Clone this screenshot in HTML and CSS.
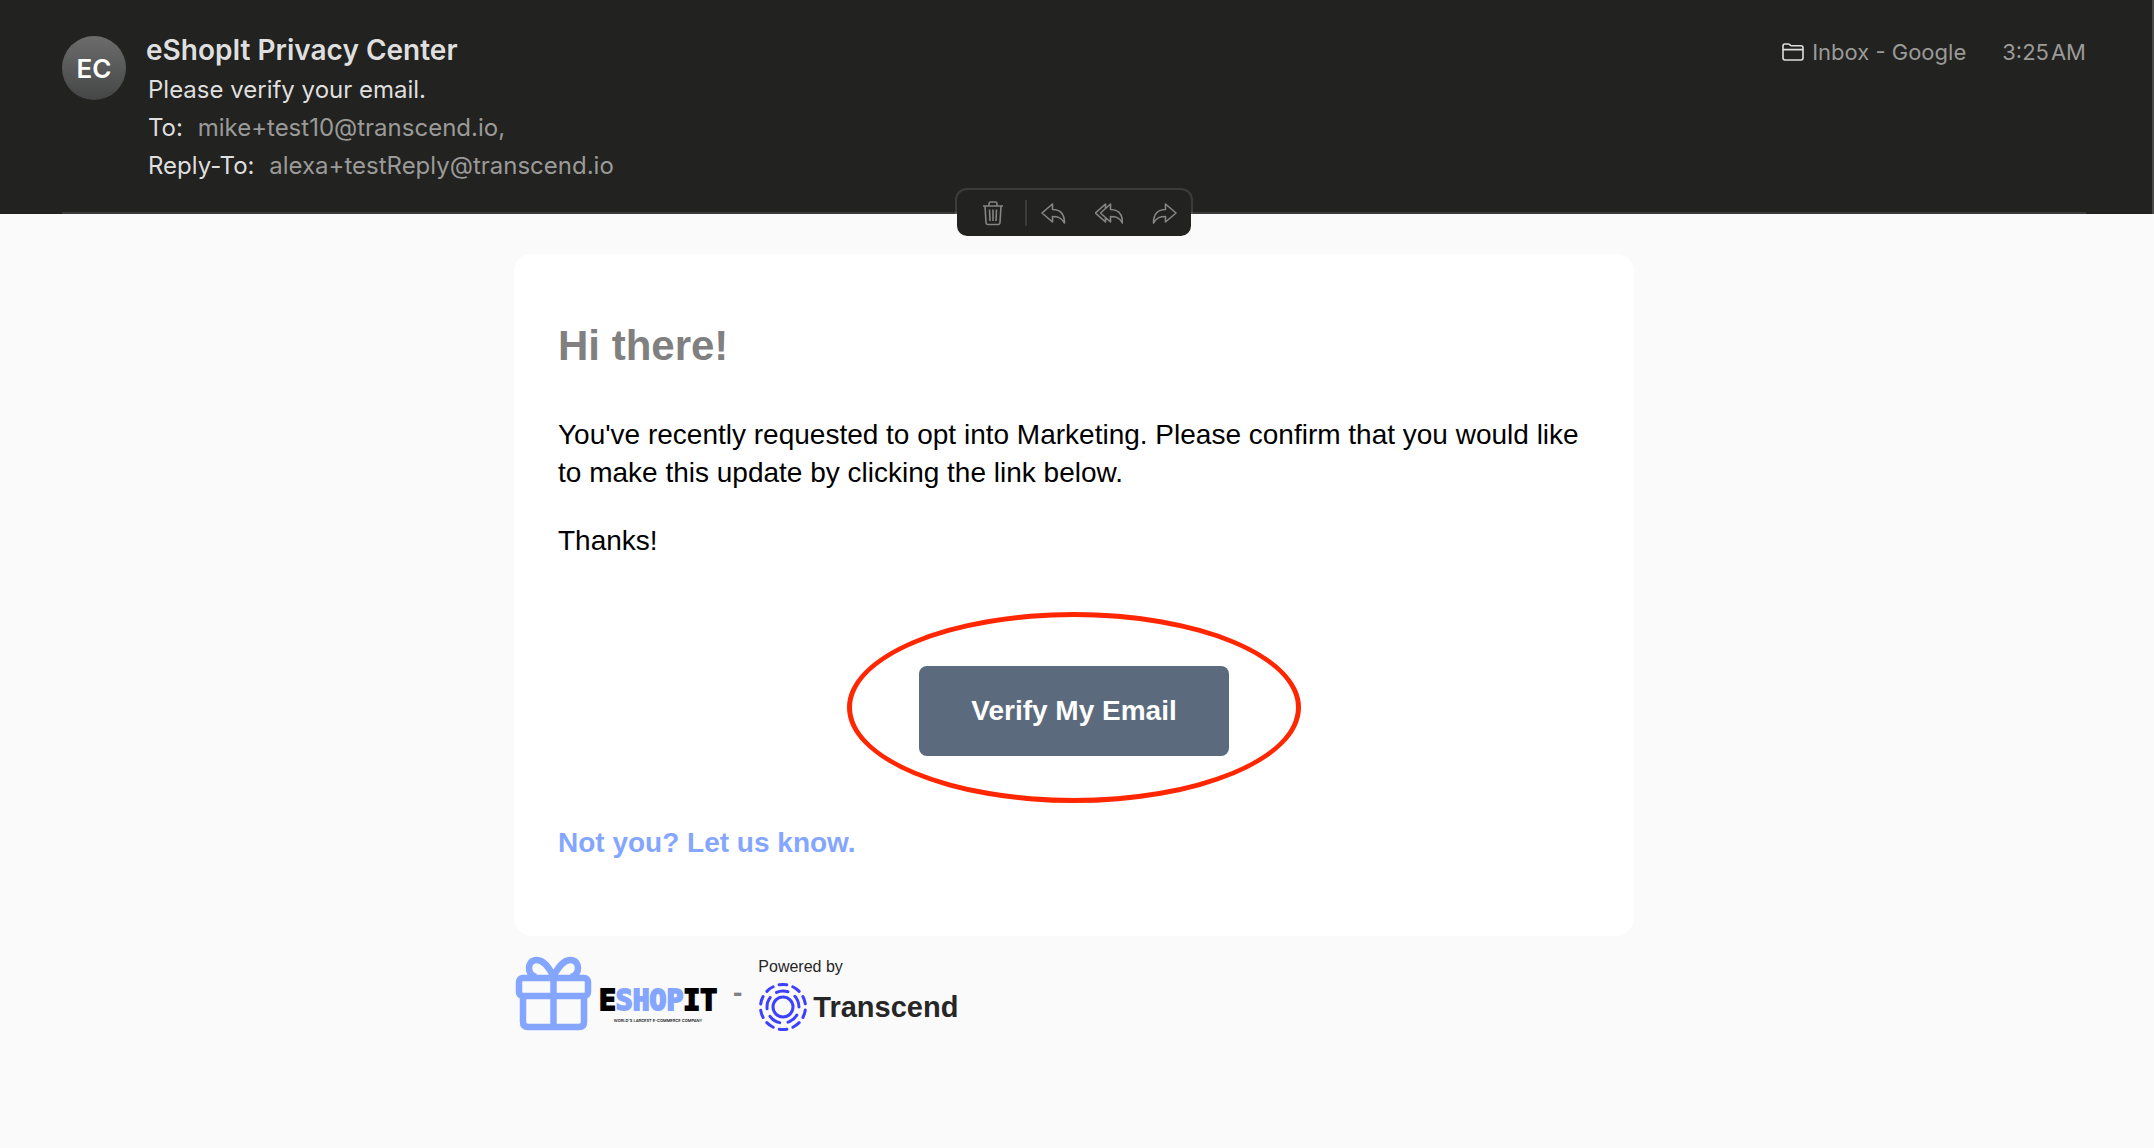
FILE: index.html
```html
<!DOCTYPE html>
<html lang="en">
<head>
    <meta charset="UTF-8">
    <meta name="viewport" content="width=device-width, initial-scale=1.0">
    <title>Please verify your email.</title>
    <link rel="stylesheet" href="styles.css">
</head>
<body>
    <header class="mail-header">
        <div class="header-inner">
            <div class="avatar">EC</div>
            <div class="header-text">
                <div class="sender">eShopIt Privacy Center</div>
                <div class="header-row">Please verify your email.</div>
                <div class="header-row">To: <span class="address">mike+test10@transcend.io,</span></div>
                <div class="header-row">Reply-To: <span class="address">alexa+testReply@transcend.io</span></div>
            </div>
            <div class="header-meta">
                <svg class="folder-icon" viewBox="0 0 22 18" fill="none" stroke="#dededf" stroke-width="1.6" stroke-linejoin="round">
                    <path d="M1 14.5V3Q1 1 3 1H6.2Q7 1 7.7 1.6L8.6 2.4Q9.2 2.8 10 2.8H19Q21 2.8 21 4.8V14.8Q21 17 19 17H3Q1 17 1 14.5ZM1 6.6H21"/>
                </svg>
                <span class="mailbox">Inbox - Google</span>
                <time class="time">3:25&#8202;AM</time>
            </div>
        </div>

        <!-- Actions sit on the bottom edge of the header -->
        <div class="toolbar">
            <button class="tool-btn" aria-label="Delete">
                <svg class="tool-icon" viewBox="0 0 28 28">
                    <path d="M4 7H24M10 7V4.5Q10 3 11.5 3H16.5Q18 3 18 4.5V7M6 7L7 23.5Q7.2 25.5 9 25.5H19Q20.8 25.5 21 23.5L22 7M10.5 10.5L11 22M14 10.5V22M17.5 10.5L17 22"/>
                </svg>
            </button>
            <span class="tool-divider"></span>
            <button class="tool-btn" aria-label="Reply">
                <svg class="tool-icon" viewBox="0 0 28 28">
                    <path d="M3 14L13.5 5V10.5C21 10.5 25.5 15 25.5 24C22.5 19 19.5 17.5 13.5 17.5V23Z"/>
                </svg>
            </button>
            <button class="tool-btn" aria-label="Reply all">
                <svg class="tool-icon" viewBox="0 0 28 28">
                    <path d="M5.500 14L15.500 5V10.500C23 10.500 27.500 15 27.500 24C24.500 19 21.500 17.500 15.500 17.500V23ZM10.500 9.500V5L0.500 14L10.500 23V18.500"/>
                </svg>
            </button>
            <button class="tool-btn" aria-label="Forward">
                <svg class="tool-icon" viewBox="0 0 28 28">
                    <path d="M25 14L14.500 5V10.500C7 10.500 2.500 15 2.500 24C5.500 19 8.500 17.500 14.500 17.500V23Z"/>
                </svg>
            </button>
        </div>
    </header>

    <main class="mail-body">
        <div class="mail-content">
            <section class="card">
                <h1 class="greeting">Hi there!</h1>
                <p class="message">You've recently requested to opt into Marketing. Please confirm that you would like to make this update by clicking the link below.</p>
                <p class="message">Thanks!</p>
                <div class="action">
                    <a class="verify-btn" href="#">Verify My Email</a>
                    <span class="highlight"></span>
                </div>
                <a class="not-you" href="#">Not you? Let us know.</a>
            </section>

            <footer class="footer">
                <div class="shop-logo">
                    <svg class="gift-icon" viewBox="0 0 76 76" fill="none" stroke="#84a6ff" stroke-width="6.5" stroke-linejoin="round">
                        <rect x="5" y="22" width="69" height="18" rx="4"/>
                        <path d="M9 40V66Q9 71 14 71H65Q70 71 70 66V40M39.500 22V71"/>
                        <path d="M39.500 20C35 12 30 4 23 4C17 4 15 8 15 12C15 17 18 20 22 21M39.500 20C44 12 49 4 56 4C62 4 64 8 64 12C64 17 61 20 57 21"/>
                    </svg>
                    <div class="shop-name">
                        <div class="shop-word">E<span class="shop-accent">SHOP</span>IT</div>
                        <div class="shop-tagline">WORLD'S LARGEST E-COMMERCE COMPANY</div>
                    </div>
                </div>
                <span class="dash">-</span>
                <div class="powered">
                    <div class="powered-label">Powered by</div>
                    <div class="transcend">
                        <svg class="transcend-icon" viewBox="0 0 50 50" fill="none" stroke="#3d40ff" stroke-width="3" stroke-linecap="round">
                            <circle cx="25" cy="25" r="10"/>
                            <circle cx="25" cy="25" r="16" pathLength="60" stroke-dasharray="7 5" transform="rotate(-114 25 25)"/>
                            <circle cx="25" cy="25" r="22.500" pathLength="100" stroke-dasharray="5.500 4.500" transform="rotate(-100 25 25)"/>
                        </svg>
                        <span class="transcend-name">Transcend</span>
                    </div>
                </div>
            </footer>
        </div>
    </main>
</body>
</html>
```
FILE: styles.css
```css
:root {
    --header-bg: #222220;
    --header-line: #3c3a3a;
    --header-text: #dfdfdf;
    --header-muted: #9a9a99;
    --page-bg: #fafafa;
    --accent: #84a6ff;
    --button-bg: #5b6b7d;
}

* {
    box-sizing: border-box;
}

body {
    margin: 0;
    background-color: var(--page-bg);
    font-family: "Liberation Sans", Arial, sans-serif;
    color: #000000;
}

/* Mail header */
.mail-header {
    position: relative;
    padding: 0 66px 0 62px;
    background-color: var(--header-bg);
    border-right: 2px solid #4a4a49;
    font-family: Inter, sans-serif;
}

.header-inner {
    display: flex;
    align-items: flex-start;
    padding: 33px 0 27px;
    border-bottom: 2px solid var(--header-line);
}

.avatar {
    width: 64px;
    height: 64px;
    margin: 3px 20px 0 0;
    border-radius: 50%;
    background: linear-gradient(#6c6c6c, #444645);
    color: #ffffff;
    font-size: 26px;
    font-weight: 600;
    line-height: 66px;
    text-align: center;
}

.header-text {
    flex: 1;
    color: var(--header-text);
}

.sender {
    padding-bottom: 4px;
    font-size: 28px;
    font-weight: 600;
    line-height: 34px;
}

.header-row {
    padding-left: 2px;
    font-size: 24px;
    line-height: 38px;
}

.address {
    margin-left: 8px;
    color: var(--header-muted);
}

.header-meta {
    display: flex;
    align-items: center;
    color: var(--header-muted);
    font-size: 22px;
    line-height: 38px;
}

.folder-icon {
    width: 22px;
    height: 18px;
    margin-right: 8px;
}

.time {
    margin-left: 36px;
}

/* Toolbar */
.toolbar {
    position: absolute;
    bottom: -24px;
    left: 62px;
    right: 66px;
    display: flex;
    align-items: center;
    width: 238px;
    height: 50px;
    margin: 0 auto;
    padding: 0 12px 0 22px;
    border: 2px solid rgba(255, 255, 255, 0.12);
    border-radius: 12px;
    background: var(--header-bg) padding-box;
}

.tool-btn {
    display: flex;
    padding: 0;
    border: none;
    background: transparent;
    cursor: pointer;
}

.tool-btn + .tool-btn {
    margin-left: 28px;
}

.tool-icon {
    width: 28px;
    height: 28px;
    fill: none;
    stroke: #858584;
    stroke-width: 1.6;
    stroke-linejoin: round;
}

.tool-divider {
    flex: none;
    width: 2px;
    height: 26px;
    margin: 0 12px 0 18px;
    background-color: #3c3c3b;
}

/* Message */
.mail-body {
    padding: 40px 6px 0 0;
}

.mail-content {
    max-width: 1120px;
    margin: 0 auto;
}

.card {
    padding: 67px 44px 74px;
    border-radius: 18px;
    background-color: #ffffff;
}

.greeting {
    margin: 0 0 45px;
    color: #808080;
    font-size: 42px;
    line-height: 50px;
}

.message {
    margin: 0 0 30px;
    font-size: 28px;
    line-height: 38px;
}

.action {
    position: relative;
    display: flex;
    justify-content: center;
    margin: 106px 0 68px;
}

.verify-btn {
    padding: 26px 52px;
    border-radius: 8px;
    background-color: var(--button-bg);
    color: #ffffff;
    font-size: 28px;
    font-weight: bold;
    line-height: 38px;
    text-decoration: none;
}

/* Red ring around the button */
.highlight {
    position: absolute;
    inset: -54px 0 -47px;
    width: 454px;
    margin: 0 auto;
    border: 5px solid #ff2600;
    border-radius: 50%;
    pointer-events: none;
}

.not-you {
    display: block;
    color: var(--accent);
    font-size: 28px;
    font-weight: bold;
    line-height: 38px;
    text-decoration: none;
}

/* Footer logos */
.footer {
    display: flex;
    align-items: flex-start;
    padding-top: 20px;
}

.shop-logo {
    display: flex;
}

.gift-icon {
    width: 76px;
    height: 76px;
    overflow: visible;
}

.shop-name {
    margin-left: 9px;
    padding-top: 29px;
    text-align: center;
}

.shop-word {
    color: #000000;
    font-family: "DejaVu Sans Mono", monospace;
    font-size: 28px;
    font-weight: bold;
    line-height: 32px;
    -webkit-text-stroke: 2px;
}

.shop-accent {
    color: var(--accent);
}

.shop-tagline {
    font-family: Inter, sans-serif;
    font-size: 4px;
    font-weight: 500;
    line-height: 8px;
}

.dash {
    margin: 18px 16px 0;
    color: #808080;
    font-size: 28px;
    font-weight: bold;
    line-height: 38px;
}

.powered {
    color: #262626;
}

.powered-label {
    font-size: 16px;
    line-height: 22px;
}

.transcend {
    display: flex;
    align-items: center;
    gap: 5px;
    margin-top: 4px;
}

.transcend-icon {
    width: 50px;
    height: 50px;
}

.transcend-name {
    font-size: 29px;
    font-weight: bold;
    line-height: 38px;
}
```
